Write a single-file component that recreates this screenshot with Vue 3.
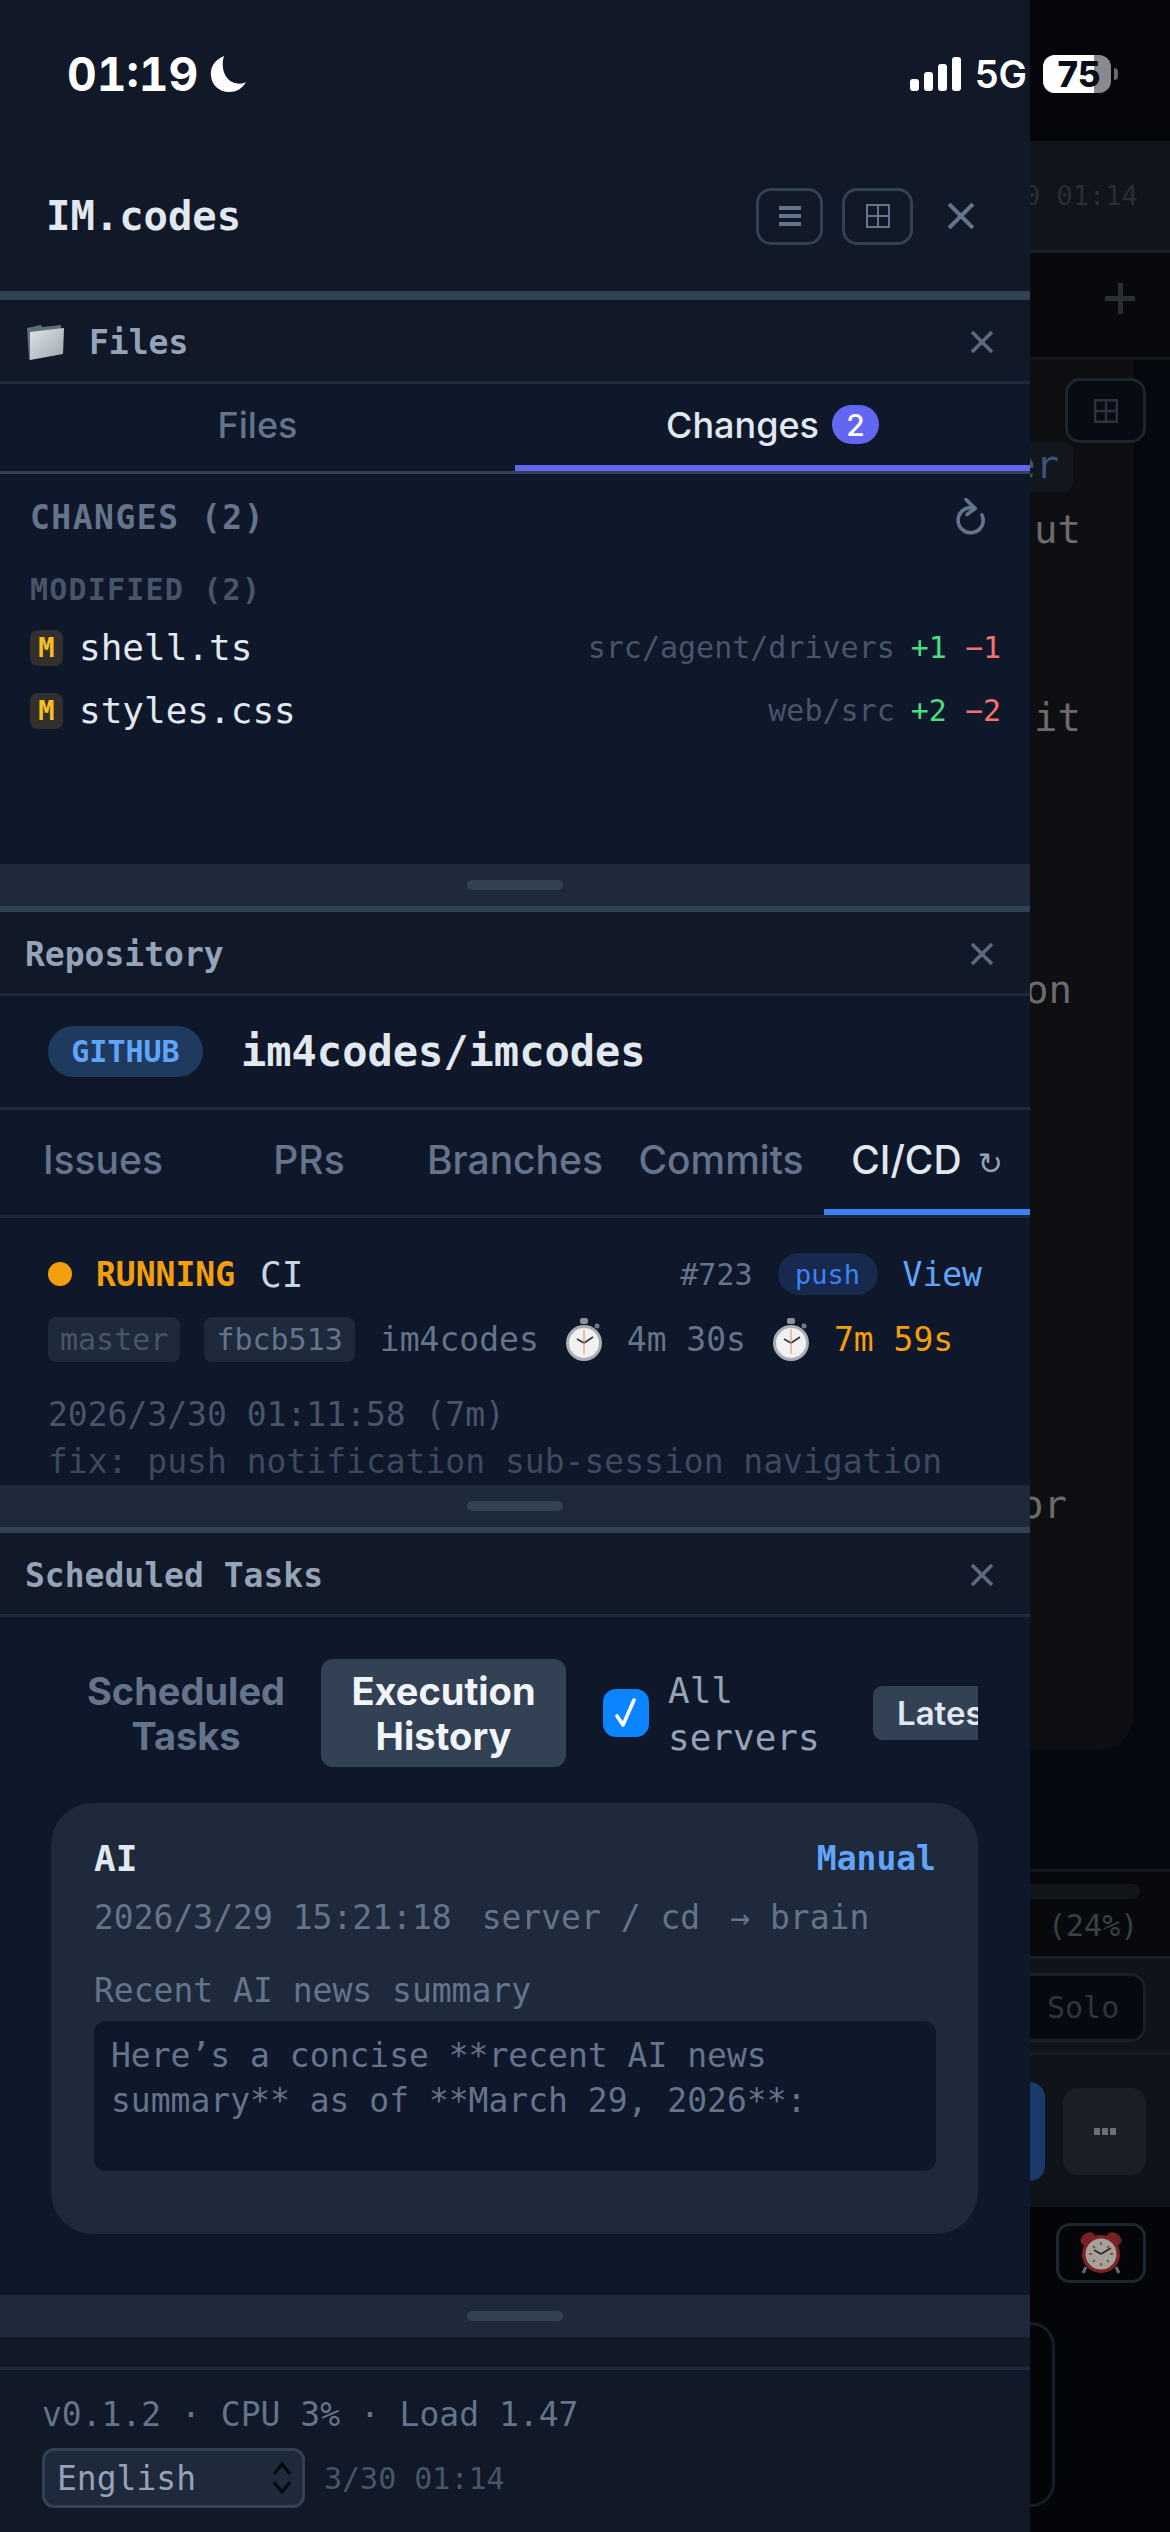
<script setup>
const files = [
  { name: 'shell.ts', path: 'src/agent/drivers', add: '+1', del: '−1' },
  { name: 'styles.css', path: 'web/src', add: '+2', del: '−2' }
]
const repoTabs = ['Issues', 'PRs', 'Branches', 'Commits', 'CI/CD']
</script>

<template>
  <div class="screen">
    <!-- page behind the drawer, already dimmed -->
    <div class="page">
      <div class="pg-top"></div>
      <div class="pg-bar"><span class="pg-time">0 01:14</span></div>
      <div class="pg-plus"><span class="plus-v"></span><span class="plus-h"></span></div>
      <div class="pg-main">
        <div class="pg-card">
          <div class="pg-tools">
            <span class="pg-grid">
              <svg width="24" height="24" viewBox="0 0 24 24" fill="none" stroke="#2d333d" stroke-width="2.4"><path d="M1.2 1.2h21.6v21.6H1.2zM12 1.2v21.6M1.2 12h21.6" /></svg>
            </span>
          </div>
          <div class="pg-tag">er</div>
          <div class="pg-line l-ut">ut</div>
          <div class="pg-line l-it">it</div>
          <div class="pg-line l-on">on</div>
          <div class="pg-line l-or">or</div>
        </div>
      </div>
      <div class="pg-progress">
        <div class="pg-track"></div>
        <div class="pg-pct">(24%)</div>
      </div>
      <div class="pg-modes"><span class="pg-solo">Solo</span></div>
      <div class="pg-actions">
        <span class="pg-send"></span>
        <span class="pg-more"><i></i><i></i><i></i></span>
      </div>
      <div class="pg-bottom">
        <span class="pg-alarm">
          <svg width="42" height="44" viewBox="0 0 42 44">
            <ellipse cx="8" cy="8" rx="8" ry="6" fill="#7a1f22" transform="rotate(-35 8 8)" />
            <ellipse cx="34" cy="8" rx="8" ry="6" fill="#7a1f22" transform="rotate(35 34 8)" />
            <path d="M6 36l-3 6M36 36l3 6" stroke="#6b6b6b" stroke-width="3" />
            <circle cx="21" cy="23" r="19" fill="#7d2226" />
            <circle cx="21" cy="23" r="15.5" fill="#a5a29c" />
            <path d="M21 23l-7-4M21 23l10-6" stroke="#2a2a2a" stroke-width="1.6" fill="none" />
            <path d="M21 11v3M21 32v3M9 23h3M30 23h3M13 15l2 2M29 15l-2 2M13 31l2-2M29 31l-2-2" stroke="#8a2c2e" stroke-width="1.3" />
          </svg>
        </span>
        <div class="pg-outline"></div>
      </div>
    </div>

    <!-- drawer -->
    <aside class="drawer">
      <header class="top-head">
        <span class="brand">IM.codes</span>
        <div class="top-actions">
          <button class="icon-btn menu"><i></i><i></i><i></i></button>
          <button class="icon-btn grid">
            <svg width="24" height="24" viewBox="0 0 24 24" fill="none" stroke="#64748b" stroke-width="2"><path d="M1 1h22v22H1zM12 1v22M1 12h22" /></svg>
          </button>
          <svg class="top-close" width="28" height="26" viewBox="0 0 28 26" fill="none" stroke="#64748b" stroke-width="4"><path d="M2 1l24 24M26 1L2 25" /></svg>
        </div>
      </header>

      <section class="panel first">
        <div class="panel-head">
          <span class="panel-title">
            <svg class="folder" width="40" height="40" viewBox="0 0 40 40">
              <defs>
                <linearGradient id="fold" x1="0" y1="0" x2="1" y2="1">
                  <stop offset="0" stop-color="#dfe4ea" />
                  <stop offset="1" stop-color="#9ea5ad" />
                </linearGradient>
              </defs>
              <path d="M1 6l14-3 1 2 19-2 1 27L3 38z" fill="#5f6e78" />
              <path d="M4 10l34-4-1 26L4 38z" fill="url(#fold)" />
            </svg>
            Files
          </span>
          <svg class="close" width="24" height="22" viewBox="0 0 24 22" fill="none" stroke="#5b6a80" stroke-width="3.6"><path d="M2 1l20 20M22 1L2 21" /></svg>
        </div>
        <div class="file-tabs">
          <div class="file-tab">Files</div>
          <div class="file-tab active">Changes <span class="count">2</span></div>
        </div>
        <div class="changes">
          <div class="changes-head">
            <span>CHANGES (2)</span>
            <svg width="32" height="38" viewBox="0 0 32 38" fill="none" stroke="#64748b" stroke-width="3.6" stroke-linecap="round" stroke-linejoin="round">
              <path d="M21 10.5A12.5 12.5 0 1 0 28 17" />
              <path d="M12 1.5l9 9-8 6" />
            </svg>
          </div>
          <div class="modified">MODIFIED (2)</div>
          <div v-for="f in files" :key="f.name" class="file-row">
            <span class="m-badge">M</span>
            <span class="file-name">{{ f.name }}</span>
            <span class="file-path">{{ f.path }}</span>
            <span class="add">{{ f.add }}</span>
            <span class="del">{{ f.del }}</span>
          </div>
        </div>
        <div class="divider"><span></span></div>
      </section>

      <section class="panel">
        <div class="panel-head">
          <span class="panel-title">Repository</span>
          <svg class="close" width="24" height="22" viewBox="0 0 24 22" fill="none" stroke="#5b6a80" stroke-width="3.6"><path d="M2 1l20 20M22 1L2 21" /></svg>
        </div>
        <div class="repo-row">
          <span class="gh-pill">GITHUB</span>
          <span class="repo-name">im4codes/imcodes</span>
        </div>
        <div class="repo-tabs">
          <div v-for="t in repoTabs" :key="t" class="repo-tab" :class="{ active: t === 'CI/CD' }">
            {{ t }}<span v-if="t === 'CI/CD'" class="spin">↻</span>
          </div>
        </div>
        <div class="ci">
          <div class="ci-row">
            <span class="dot"></span>
            <span class="running">RUNNING</span>
            <span class="ci-name">CI</span>
            <span class="run-no">#723</span>
            <span class="push">push</span>
            <span class="view">View</span>
          </div>
          <div class="ci-meta">
            <span class="tag dim">master</span>
            <span class="tag">fbcb513</span>
            <span>im4codes</span>
            <svg class="watch" width="38" height="44" viewBox="0 0 38 44">
              <rect x="15" y="0" width="8" height="6" rx="2" fill="#8d9299" />
              <circle cx="32" cy="8" r="2.5" fill="#777c83" />
              <circle cx="19" cy="25" r="18" fill="#a9aeb6" />
              <circle cx="19" cy="25" r="15" fill="#f1f1ef" />
              <path d="M19 25l-7-4M19 25l9-6" stroke="#33363b" stroke-width="1.6" fill="none" />
              <path d="M19 11v25" stroke="#e08a6a" stroke-width="1" />
            </svg>
            <span>4m 30s</span>
            <svg class="watch" width="38" height="44" viewBox="0 0 38 44">
              <rect x="15" y="0" width="8" height="6" rx="2" fill="#8d9299" />
              <circle cx="32" cy="8" r="2.5" fill="#777c83" />
              <circle cx="19" cy="25" r="18" fill="#a9aeb6" />
              <circle cx="19" cy="25" r="15" fill="#f1f1ef" />
              <path d="M19 25l-7-4M19 25l9-6" stroke="#33363b" stroke-width="1.6" fill="none" />
              <path d="M19 11v25" stroke="#e08a6a" stroke-width="1" />
            </svg>
            <span class="amber">7m 59s</span>
          </div>
          <div class="ci-date">2026/3/30 01:11:58 (7m)</div>
          <div class="ci-msg">fix: push notification sub-session navigation</div>
        </div>
        <div class="divider"><span></span></div>
      </section>

      <section class="panel">
        <div class="panel-head">
          <span class="panel-title">Scheduled Tasks</span>
          <svg class="close" width="24" height="22" viewBox="0 0 24 22" fill="none" stroke="#5b6a80" stroke-width="3.6"><path d="M2 1l20 20M22 1L2 21" /></svg>
        </div>
        <div class="sched">
          <div class="sched-bar">
            <div class="sched-tab">Scheduled<br />Tasks</div>
            <div class="sched-tab active">Execution<br />History</div>
            <span class="check">
              <svg width="26" height="32" viewBox="0 0 26 32" fill="none" stroke="#fff" stroke-width="3.6" stroke-linecap="round" stroke-linejoin="round"><path d="M4 19l6 9L21 3" /></svg>
            </span>
            <span class="all">All<br />servers</span>
            <span class="latest">Latest</span>
          </div>
          <article class="card">
            <div class="card-head">
              <span class="card-title">AI</span>
              <span class="card-mode">Manual</span>
            </div>
            <div class="card-meta">
              <span>2026/3/29 15:21:18</span>
              <span>server / cd</span>
              <span class="arrow">→ brain</span>
            </div>
            <div class="card-label">Recent AI news summary</div>
            <div class="card-body">Here’s a concise **recent AI news<br />summary** as of **March 29, 2026**:</div>
          </article>
        </div>
        <div class="divider"><span></span></div>
      </section>

      <footer class="foot">
        <div class="foot-gap"></div>
        <div class="foot-body">
          <div class="version">v0.1.2 · CPU 3% · Load 1.47</div>
          <div class="foot-row">
            <div class="lang">
              <span>English</span>
              <svg width="20" height="34" viewBox="0 0 20 34" fill="none" stroke="#05070c" stroke-width="3"><path d="M2 13l8-10 8 10M2 21l8 10 8-10" /></svg>
            </div>
            <span class="foot-time">3/30 01:14</span>
          </div>
        </div>
      </footer>
    </aside>

    <!-- status bar lies over everything -->
    <div class="status">
      <div class="st-left">
        <span class="clock">01:19</span>
        <svg width="38" height="38" viewBox="0 0 38 38"><path d="M15 1C5 5 1 13 2 21c1 10 9 16 18 16 7 0 13-3 17-10-3 2-7 2-11 1C17 26 11 14 15 1z" fill="#fff" /></svg>
      </div>
      <div class="st-right">
        <span class="signal"><i class="b1"></i><i class="b2"></i><i class="b3"></i><i class="b4"></i></span>
        <span class="net">5G</span>
        <span class="battery"><span class="level"></span><span class="pct">75</span></span>
        <span class="nub"></span>
      </div>
    </div>
  </div>
</template>

<style>
html, body { margin: 0; background: #05070c; }
</style>

<style scoped>
.screen {
  position: relative;
  width: 1170px;
  height: 2532px;
  overflow: hidden;
  font-family: "DejaVu Sans Mono", monospace;
  background: #05070c;
}

/* ---- page behind ---- */
.page { display: flex; flex-direction: column; height: 2532px; padding-left: 1030px; box-sizing: border-box; }
.pg-top { height: 141px; background: #04060c; }
.pg-bar { height: 109px; background: #10141b; border-bottom: 3px solid #1a1e27; display: flex; align-items: center; white-space: nowrap; }
.pg-time { font-size: 27px; color: #2a2e36; margin-left: -6px; }
.pg-plus { position: relative; height: 104px; background: #08090c; border-bottom: 3px solid #13161b; }
.plus-v { position: absolute; left: 88px; top: 30px; width: 5px; height: 31px; background: #2a2e34; }
.plus-h { position: absolute; left: 75px; top: 43px; width: 30px; height: 5px; background: #2a2e34; }
.pg-main { height: 1509px; background: #05080f; border-bottom: 3px solid #12151c; }
.pg-card { width: 104px; height: 1390px; background: #0d0f12; border-bottom-right-radius: 36px; padding-top: 18px; box-sizing: border-box; }
.pg-tools { display: flex; padding-left: 35px; }
.pg-grid { width: 81px; height: 65px; flex: none; box-sizing: border-box; border: 3px solid #1f242d; border-radius: 15px; background: #070b14; display: flex; align-items: center; justify-content: center; }
.pg-tag { width: 43px; height: 50px; margin-top: -1px; background: #12161d; border-radius: 0 9px 9px 0; font-size: 39px; line-height: 46px; color: #3f5375; padding-left: 8px; box-sizing: border-box; text-indent: -26px; white-space: nowrap; overflow: hidden; }
.pg-line { font-size: 39px; line-height: 46px; color: #6b6b6b; white-space: nowrap; }
.l-ut { margin: 15px 0 0 4px; }
.l-it { margin: 142px 0 0 4px; }
.l-on { margin: 226px 0 0 -5px; }
.l-or { margin: 469px 0 0 -10px; }
.pg-progress { background: #08090c; border-bottom: 3px solid #1a1e27; padding-top: 12px; box-sizing: border-box; height: 87px; }
.pg-track { width: 110px; height: 15px; background: #12161b; border-radius: 0 8px 8px 0; }
.pg-pct { font-size: 30px; line-height: 34px; margin: 10px 0 0 18px; color: #3a4048; }
.pg-modes { height: 96px; box-sizing: border-box; background: #10141a; border-bottom: 3px solid #171b23; padding-top: 14px; }
.pg-solo { display: block; width: 116px; height: 69px; box-sizing: border-box; background: #060910; border: 3px solid #1a1e27; border-left: 0; border-radius: 0 15px 15px 0; color: #30343c; font-size: 30px; line-height: 63px; padding-left: 17px; }
.pg-actions { height: 152px; box-sizing: border-box; background: #10141a; display: flex; align-items: flex-start; padding-top: 27px; }
.pg-send { width: 15px; height: 99px; background: #1a3a6c; border-radius: 0 15px 15px 0; }
.pg-more { width: 83px; height: 87px; margin: 6px 0 0 18px; background: #1a1f27; border-radius: 15px; display: flex; align-items: center; justify-content: center; gap: 2px; }
.pg-more i { width: 6px; height: 7px; background: #6c7076; }
.pg-bottom { flex: 1; background: #040508; display: flex; flex-direction: column; padding-top: 16px; }
.pg-alarm { margin-left: 26px; width: 90px; height: 60px; box-sizing: border-box; border: 3px solid #1e2630; border-radius: 14px; display: flex; align-items: center; justify-content: center; }
.pg-outline { margin-top: 39px; width: 25px; height: 185px; box-sizing: border-box; border: 3px solid #171d26; border-left: 0; border-radius: 0 24px 24px 0; }

/* ---- drawer ---- */
.drawer {
  position: absolute;
  left: 0;
  top: 0;
  width: 1030px;
  height: 2532px;
  display: flex;
  flex-direction: column;
  background: #0f172a;
}
.top-head {
  height: 300px;
  box-sizing: border-box;
  padding: 141px 55px 0 46px;
  background: #111827;
  border-bottom: 9px solid #334155;
  display: flex;
  align-items: center;
  justify-content: space-between;
}
.brand { font-size: 40.5px; font-weight: 700; color: #e2e8f0; }
.top-actions { display: flex; align-items: center; }
.icon-btn {
  height: 57px;
  padding: 0;
  box-sizing: border-box;
  background: transparent;
  border: 3px solid #334155;
  border-radius: 15px;
  display: flex;
  align-items: center;
  justify-content: center;
}
.menu { width: 67px; flex-direction: column; gap: 4px; margin-right: 19px; }
.menu i { width: 22px; height: 4px; background: #64748b; }
.grid { width: 71px; margin-right: 34px; }

.panel { flex: none; }
.panel + .panel { border-top: 6px solid #334155; }
.panel-head {
  height: 84px;
  box-sizing: border-box;
  padding: 3px 36px 0 25px;
  background: #111827;
  border-bottom: 3px solid #1e293b;
  display: flex;
  align-items: center;
  justify-content: space-between;
}
.panel-title { font-size: 33px; font-weight: 700; color: #94a3b8; display: flex; align-items: center; }
.folder { margin: 0 23px 0 1px; }

.file-tabs { height: 90px; box-sizing: border-box; display: flex; border-bottom: 3px solid #334155; }
.file-tab {
  flex: 1;
  box-sizing: border-box;
  font-family: Inter, sans-serif;
  font-size: 36px;
  font-weight: 500;
  color: #64748b;
  display: flex;
  align-items: center;
  justify-content: center;
  gap: 13px;
  border-bottom: 6px solid transparent;
}
.file-tab.active { color: #e2e8f0; border-bottom-color: #6366f1; }
.count {
  width: 47px;
  height: 39px;
  border-radius: 20px;
  background: #6366f1;
  color: #fff;
  font-size: 30px;
  display: flex;
  align-items: center;
  justify-content: center;
}

.changes { height: 390px; box-sizing: border-box; padding: 22px 29px 0 30px; }
.changes-head {
  height: 42px;
  display: flex;
  align-items: center;
  justify-content: space-between;
  font-size: 33px;
  font-weight: 700;
  letter-spacing: 1.5px;
  color: #64748b;
  padding-right: 15px;
}
.modified { margin-top: 31px; font-size: 30px; line-height: 42px; font-weight: 700; letter-spacing: 1.2px; color: #475569; }
.file-row { height: 63px; display: flex; align-items: center; font-size: 30px; }
.modified + .file-row { margin-top: 5px; }
.m-badge {
  width: 33px;
  height: 36px;
  border-radius: 8px;
  background: #322f2c;
  color: #fbbf24;
  font-size: 27px;
  font-weight: 700;
  display: flex;
  align-items: center;
  justify-content: center;
}
.file-name { margin-left: 16px; font-size: 36px; color: #e2e8f0; }
.file-path { margin-left: auto; color: #475569; }
.add { margin-left: 16px; color: #4ade80; }
.del { margin-left: 18px; color: #f87171; }

.divider {
  height: 42px;
  background: #1e293b;
  display: flex;
  align-items: flex-start;
  justify-content: center;
}
.divider span { width: 96px; height: 10px; margin-top: 16px; border-radius: 5px; background: #334155; }

.repo-row {
  height: 114px;
  box-sizing: border-box;
  padding-left: 48px;
  border-bottom: 3px solid #1e293b;
  display: flex;
  align-items: center;
  gap: 38px;
}
.gh-pill {
  width: 155px;
  height: 51px;
  border-radius: 26px;
  background: #1e3a5f;
  color: #60a5fa;
  font-size: 30px;
  font-weight: 700;
  display: flex;
  align-items: center;
  justify-content: center;
}
.repo-name { font-size: 42px; font-weight: 700; color: #e2e8f0; }

.repo-tabs { height: 108px; box-sizing: border-box; display: flex; border-bottom: 3px solid #1e293b; }
.repo-tab {
  flex: 1;
  min-width: 0;
  box-sizing: border-box;
  font-family: Inter, sans-serif;
  font-size: 39px;
  font-weight: 500;
  color: #64748b;
  display: flex;
  align-items: center;
  justify-content: center;
  white-space: nowrap;
  border-bottom: 6px solid transparent;
}
.repo-tab.active { color: #e2e8f0; border-bottom-color: #3b82f6; }
.spin { margin: 8px 0 0 16px; font-family: "DejaVu Sans", sans-serif; font-size: 30px; color: #94a3b8; }

.ci { height: 267px; box-sizing: border-box; padding: 35px 48px 0; overflow: hidden; font-size: 33px; color: #64748b; }
.ci-row { height: 42px; display: flex; align-items: center; }
.dot { width: 24px; height: 24px; border-radius: 50%; background: #f59e0b; margin-right: 24px; }
.running { font-weight: 700; color: #f59e0b; margin-right: 25px; }
.ci-name { font-size: 36px; color: #cbd5e1; }
.run-no { margin-left: auto; font-size: 30px; color: #64748b; margin-right: 25px; }
.push {
  width: 100px;
  height: 42px;
  border-radius: 21px;
  background: #172a4d;
  color: #3b82f6;
  font-size: 27px;
  display: flex;
  align-items: center;
  justify-content: center;
  margin-right: 25px;
}
.view { color: #60a5fa; }
.ci-meta { margin-top: 22px; height: 45px; display: flex; align-items: center; white-space: nowrap; }
.tag {
  height: 45px;
  padding: 0 12px;
  margin-right: 25px;
  border-radius: 8px;
  background: #1e293b;
  font-size: 30px;
  line-height: 45px;
}
.tag.dim { margin-right: 24px; color: #475569; }
.watch { margin: 0 24px 0 26px; }
.amber { color: #f59e0b; }
.ci-date { margin-top: 31px; line-height: 44px; color: #475569; }
.ci-msg { margin-top: 3px; line-height: 44px; color: #3d4a5e; white-space: nowrap; }

.sched { height: 678px; box-sizing: border-box; padding: 42px 52px 0 51px; }
.sched-bar { height: 108px; display: flex; align-items: center; overflow: hidden; padding-left: 6px; }
.sched-tab {
  flex: none;
  box-sizing: border-box;
  height: 108px;
  width: 258px;
  margin-right: 6px;
  font-family: Inter, sans-serif;
  font-size: 38px;
  font-weight: 700;
  line-height: 45px;
  color: #64748b;
  text-align: center;
  padding-top: 10px;
  border-radius: 12px;
}
.sched-tab.active { width: 245px; margin-right: 37px; background: #334155; color: #f1f5f9; }
.check {
  flex: none;
  width: 46px;
  height: 48px;
  border-radius: 13px;
  background: #0a84ff;
  display: flex;
  align-items: center;
  justify-content: center;
  margin-right: 19px;
}
.all { flex: none; width: 148px; font-size: 36px; line-height: 47px; color: #94a3b8; margin-right: 57px; padding-top: 2px; }
.latest {
  flex: none;
  height: 54px;
  padding: 0 24px;
  border-radius: 9px;
  background: #334155;
  color: #e2e8f0;
  font-family: Inter, sans-serif;
  font-size: 33px;
  font-weight: 600;
  line-height: 54px;
}
.card {
  margin-top: 36px;
  height: 431px;
  box-sizing: border-box;
  padding: 33px 42px 0 43px;
  border-radius: 42px;
  background: #1e293b;
  font-size: 33px;
  color: #64748b;
}
.card-head { height: 44px; display: flex; align-items: center; justify-content: space-between; }
.card-title { font-size: 36px; font-weight: 700; color: #e2e8f0; }
.card-mode { font-weight: 700; color: #60a5fa; }
.card-meta { margin-top: 16px; line-height: 44px; display: flex; gap: 30px; color: #64748b; white-space: nowrap; }
.arrow { color: #64748b; }
.card-label { margin-top: 29px; line-height: 44px; }
.card-body {
  margin-top: 8px;
  height: 150px;
  box-sizing: border-box;
  padding: 13px 17px 0;
  border-radius: 12px;
  background: #0f172a;
  line-height: 44.5px;
  white-space: nowrap;
}

.foot { flex: 1; background: #111827; }
.foot-gap { height: 30px; border-bottom: 3px solid #1e293b; }
.foot-body { padding: 25px 0 0 42px; }
.version { font-size: 33px; line-height: 40px; color: #64748b; }
.foot-row { margin-top: 13px; display: flex; align-items: center; gap: 19px; }
.lang {
  width: 263px;
  height: 60px;
  box-sizing: border-box;
  padding: 0 10px 0 12px;
  background: #1e293b;
  border: 3px solid #334155;
  border-radius: 12px;
  display: flex;
  align-items: center;
  justify-content: space-between;
  font-size: 33px;
  color: #94a3b8;
}
.foot-time { font-size: 30px; color: #475569; }

/* ---- status bar ---- */
.status {
  position: absolute;
  left: 0;
  top: 0;
  width: 1170px;
  height: 150px;
  box-sizing: border-box;
  padding: 54px 52px 0 67px;
  display: flex;
  align-items: flex-start;
  justify-content: space-between;
  font-family: Inter, sans-serif;
  color: #fff;
}
.st-left { display: flex; align-items: center; gap: 11px; height: 40px; }
.clock { font-size: 46px; font-weight: 700; line-height: 40px; font-variant-numeric: tabular-nums; }
.st-right { display: flex; align-items: center; height: 40px; }
.signal { display: flex; align-items: flex-end; gap: 5px; height: 34px; margin-right: 14px; }
.signal i { width: 9px; background: #fff; border-radius: 3px; }
.b1 { height: 12px; }
.b2 { height: 19px; }
.b3 { height: 27px; }
.b4 { height: 34px; }
.net { font-size: 38px; font-weight: 600; margin-right: 16px; }
.battery {
  position: relative;
  width: 68px;
  height: 38px;
  border-radius: 12px;
  overflow: hidden;
  background: #8a8a8e;
  display: flex;
  align-items: center;
  justify-content: center;
}
.level { position: absolute; left: 0; top: 0; bottom: 0; width: 51px; background: #fff; }
.pct { position: relative; color: #0a0e18; font-size: 35px; line-height: 38px; font-weight: 800; margin-left: 4px; }
.nub { width: 4px; height: 12px; margin-left: 3px; background: #6a6a6e; border-radius: 0 4px 4px 0; }
</style>
